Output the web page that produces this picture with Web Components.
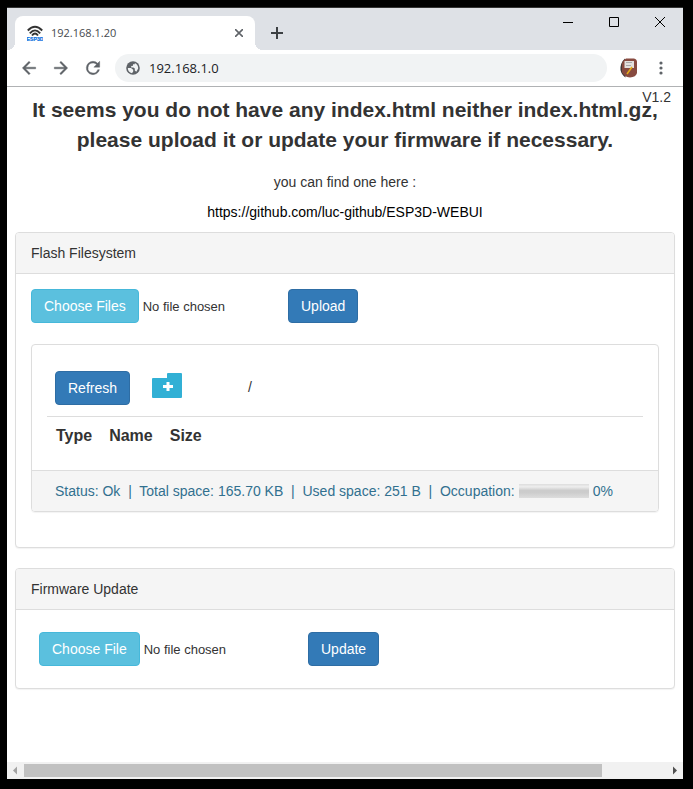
<!DOCTYPE html>
<html lang="en">
<head>
<meta charset="utf-8">
<title>192.168.1.20</title>
<style>
    body {
        box-sizing: border-box;
        display: flex;
        min-height: 100vh;
        margin: 0;
        padding: 7px 10px 10px 7px;
        background: #000;
        color: #333;
        font: 14px/20px "Liberation Sans", Arial, sans-serif;
    }
</style>
</head>
<body>
<browser-window>
    <browser-tab slot="tab">192.168.1.20</browser-tab>
    <browser-toolbar slot="toolbar" address="192.168.1.0"></browser-toolbar>
    <esp-page version="V1.2">
        <esp-panel heading="Flash Filesystem">
            <upload-form button="Upload" multiple></upload-form>
            <file-browser></file-browser>
        </esp-panel>
        <esp-panel heading="Firmware Update">
            <upload-form class="inset" button="Update"></upload-form>
        </esp-panel>
    </esp-page>
    <scroll-bar slot="scrollbar"></scroll-bar>
</browser-window>

<script>
function attach(element, html) {
    const template = document.createElement("template");
    template.innerHTML = html;
    const shadow = element.attachShadow({ mode: "open" });
    shadow.appendChild(template.content.cloneNode(true));
    return shadow;
}

class BrowserWindow extends HTMLElement {
    constructor() {
        super();
        attach(this, `
            <style>
                :host {
                    box-sizing: border-box;
                    display: flex;
                    flex-direction: column;
                    flex: 1;
                    min-width: 0;
                    border-top: 1px solid #333;
                    background: #fff;
                }

                .strip {
                    display: flex;
                    justify-content: space-between;
                    height: 42px;
                    background: #dee1e6;
                }

                .tabs {
                    display: flex;
                    align-items: flex-end;
                    padding-left: 8px;
                }

                button {
                    display: flex;
                    align-items: center;
                    justify-content: center;
                    padding: 0;
                    border: 0;
                    background: none;
                }

                .new {
                    width: 28px;
                    height: 34px;
                    margin-left: 8px;
                }

                .controls {
                    display: flex;
                }

                .controls button {
                    width: 46px;
                    height: 28px;
                }

                main {
                    flex: 1;
                }
            </style>

            <div class="strip">
                <div class="tabs">
                    <slot name="tab"></slot>
                    <button class="new" aria-label="New tab">
                        <svg width="12" height="12" stroke="#3c4043" stroke-width="2"><path d="M6 0V12M0 6H12"/></svg>
                    </button>
                </div>
                <div class="controls">
                    <button aria-label="Minimize">
                        <svg width="10" height="10" stroke="#000"><path d="M0 5.500H10"/></svg>
                    </button>
                    <button aria-label="Maximize">
                        <svg width="10" height="10" stroke="#000" fill="none"><path d="M.5.5h9v9h-9z"/></svg>
                    </button>
                    <button aria-label="Close">
                        <svg width="10" height="10" stroke="#000"><path d="M0 0L10 10M10 0L0 10"/></svg>
                    </button>
                </div>
            </div>
            <slot name="toolbar"></slot>
            <main><slot></slot></main>
            <slot name="scrollbar"></slot>
        `);
    }
}

class BrowserTab extends HTMLElement {
    constructor() {
        super();
        attach(this, `
            <style>
                :host {
                    box-sizing: border-box;
                    position: relative;
                    display: flex;
                    align-items: center;
                    width: 240px;
                    height: 34px;
                    padding: 0 10px 0 12px;
                    border-radius: 8px 8px 0 0;
                    background: #fff;
                    color: #45494d;
                    font: 11px/16px "Open Sans", sans-serif;
                }

                /* flared feet of the active tab */
                :host::before,
                :host::after {
                    content: "";
                    position: absolute;
                    bottom: 0;
                    width: 8px;
                    height: 8px;
                }

                :host::before {
                    right: 100%;
                    background: radial-gradient(circle at 0 0, transparent 8px, #fff 8px);
                }

                :host::after {
                    left: 100%;
                    background: radial-gradient(circle at 100% 0, transparent 8px, #fff 8px);
                }

                span {
                    flex: 1;
                    margin-left: 8px;
                }

                button {
                    display: flex;
                    padding: 2px;
                    border: 0;
                    background: none;
                }
            </style>

            <svg width="16" height="16" viewBox="0 0 16 16" fill="none" stroke="#333">
                <path stroke-width="1.900" d="M.8 5.500Q8-2 15.200 5.500M2.800 8.300Q8 2.500 13.200 8.300"/>
                <path stroke-width="1.800" d="M5 10.500Q8 6.500 11 10.500"/>
                <text x="-0.500" y="15.500" fill="#0a6ee0" stroke="#0a6ee0" stroke-width=".2" font-family="Liberation Sans, sans-serif" font-size="5.200" font-weight="bold">ESP3D</text>
            </svg>
            <span><slot></slot></span>
            <button aria-label="Close tab">
                <svg width="8" height="8" stroke="#5f6368" stroke-width="1.600"><path d="M0 0L8 8M8 0L0 8"/></svg>
            </button>
        `);
    }
}

class BrowserToolbar extends HTMLElement {
    constructor() {
        super();
        const shadow = attach(this, `
            <style>
                :host {
                    box-sizing: border-box;
                    display: flex;
                    align-items: center;
                    height: 37px;
                    padding: 0 6px;
                    border-bottom: 1px solid #b0b2b4;
                }

                button {
                    display: flex;
                    align-items: center;
                    justify-content: center;
                    width: 32px;
                    height: 28px;
                    padding: 0;
                    border: 0;
                    background: none;
                    fill: #5f6368;
                }

                .address {
                    display: flex;
                    flex: 1;
                    align-items: center;
                    gap: 8px;
                    min-width: 0;
                    height: 28px;
                    margin: 0 6px;
                    padding: 0 10px;
                    border-radius: 14px;
                    background: #f1f3f4;
                }

                input {
                    flex: 1;
                    min-width: 0;
                    padding: 0;
                    border: 0;
                    outline: 0;
                    background: none;
                    color: #202124;
                    font: 13px/20px "Open Sans", sans-serif;
                }
            </style>

            <button aria-label="Back">
                <svg width="20" height="20" viewBox="0 0 24 24" stroke="#5f6368" stroke-width=".5"><path d="M20 11H7.830l5.590-5.590L12 4l-8 8 8 8 1.410-1.410L7.830 13H20z"/></svg>
            </button>
            <button aria-label="Forward">
                <svg width="20" height="20" viewBox="0 0 24 24" stroke="#5f6368" stroke-width=".5"><path d="M12 4l-1.410 1.410L16.170 11H4v2h12.170l-5.580 5.590L12 20l8-8z"/></svg>
            </button>
            <button aria-label="Reload">
                <svg width="20" height="20" viewBox="0 0 24 24" stroke="#5f6368" stroke-width=".5"><path d="M17.650 6.350A7.960 7.960 0 0 0 12 4a8 8 0 1 0 7.730 10h-2.080A6 6 0 1 1 12 6c1.660 0 3.140.69 4.220 1.780L13 11h7V4z"/></svg>
            </button>
            <div class="address">
                <svg width="16" height="16" viewBox="0 0 16 16">
                    <circle cx="8" cy="8" r="6.800" fill="#5f6368"/>
                    <path fill="#f1f3f4" d="M2.800 8H6L8.200 9.800V11.500L7 13.200Q3 12.500 2.800 8ZM9.800 3Q13.300 4.500 13.200 8.500L11.300 11.800 9.800 10.500V8.500L8.300 7.500H6.200V6L8 5.800V4.300H9.800Z"/>
                </svg>
                <input type="text" aria-label="Address">
            </div>
            <button aria-label="Extension">
                <svg width="20" height="20" viewBox="0 0 20 20">
                    <path fill="#333" d="M6 .5Q1 5 1.500 12q1 5 5 7.500z"/>
                    <path fill="#884b40" d="M7 .5H15Q18 1 18 4V15Q17 19 11 19.500 5 19 2.800 14V6Q4 2 7 .5Z"/>
                    <path fill="#e3e0dd" d="M5.500 3h9.500v7H5.500z"/>
                    <path stroke="#aaa" d="M7 4.500h6M7 7.500h5"/>
                    <path stroke="#e6ad18" stroke-width="1.500" d="M13 9L8 16"/>
                </svg>
            </button>
            <button aria-label="Menu">
                <svg width="4" height="14" viewBox="0 0 4 14"><circle cx="2" cy="2" r="1.600"/><circle cx="2" cy="7" r="1.600"/><circle cx="2" cy="12" r="1.600"/></svg>
            </button>
        `);
        this.input = shadow.querySelector("input");
    }

    connectedCallback() {
        this.input.value = this.getAttribute("address");
    }
}

class EspPage extends HTMLElement {
    constructor() {
        super();
        const shadow = attach(this, `
            <style>
                :host {
                    position: relative;
                    display: block;
                    padding: 8px;
                    text-align: center;
                }

                .version {
                    position: absolute;
                    top: 0;
                    right: 12px;
                }

                h1 {
                    margin: 0 0 17px;
                    font-size: 21px;
                    line-height: 30px;
                }

                p {
                    margin: 0 0 10px;
                }

                a {
                    color: #000;
                    text-decoration: none;
                }

                .panels {
                    display: flex;
                    flex-direction: column;
                    gap: 20px;
                    text-align: left;
                }
            </style>

            <div class="version"></div>
            <h1>It seems you do not have any index.html neither index.html.gz,<br>please upload it or update your firmware if necessary.</h1>
            <p>you can find one here :</p>
            <p><a href="https://github.com/luc-github/ESP3D-WEBUI">https://github.com/luc-github/ESP3D-WEBUI</a></p>
            <div class="panels"><slot></slot></div>
        `);
        this.version = shadow.querySelector(".version");
    }

    connectedCallback() {
        this.version.textContent = this.getAttribute("version");
    }
}

class EspPanel extends HTMLElement {
    constructor() {
        super();
        const shadow = attach(this, `
            <style>
                :host {
                    display: block;
                    border: 1px solid #ddd;
                    border-radius: 4px;
                    background: #fff;
                    box-shadow: 0 1px 1px rgba(0, 0, 0, 0.05);
                }

                header {
                    padding: 10px 15px;
                    border-bottom: 1px solid #ddd;
                    border-radius: 3px 3px 0 0;
                    background: #f5f5f5;
                }

                .body {
                    padding: 15px;
                }
            </style>

            <header></header>
            <div class="body"><slot></slot></div>
        `);
        this.header = shadow.querySelector("header");
    }

    connectedCallback() {
        this.header.textContent = this.getAttribute("heading");
    }
}

class EspButton extends HTMLElement {
    constructor() {
        super();
        attach(this, `
            <style>
                :host {
                    display: inline-flex;
                }

                button {
                    height: 34px;
                    padding: 0 12px;
                    border: 1px solid #2e6da4;
                    border-radius: 4px;
                    background: #337ab7;
                    color: #fff;
                    font: inherit;
                }
            </style>

            <button type="button"><slot></slot></button>
        `);
    }
}

class UploadForm extends HTMLElement {
    constructor() {
        super();
        const shadow = attach(this, `
            <style>
                :host {
                    display: flex;
                }

                :host(.inset) {
                    padding: 7px 8px;
                }

                input {
                    width: 257px;
                    height: 34px;
                    color: #333;
                    font: 13px/20px "Liberation Sans", Arial, sans-serif;
                }

                :host(.inset) input {
                    width: 269px;
                }

                input::file-selector-button {
                    height: 34px;
                    margin: 0 4px 0 0;
                    padding: 0 12px;
                    border: 1px solid #46b8da;
                    border-radius: 4px;
                    background: #5bc0de;
                    color: #fff;
                    font-size: 14px;
                }
            </style>

            <input type="file">
            <esp-button></esp-button>
        `);
        this.input = shadow.querySelector("input");
        this.button = shadow.querySelector("esp-button");
    }

    connectedCallback() {
        this.input.multiple = this.hasAttribute("multiple");
        this.input.setAttribute("aria-label", this.getAttribute("button"));
        this.button.textContent = this.getAttribute("button");
    }
}

class FileBrowser extends HTMLElement {
    constructor() {
        super();
        attach(this, `
            <style>
                :host {
                    display: block;
                    margin: 21px 0 20px;
                    border: 1px solid #ddd;
                    border-radius: 4px;
                    box-shadow: 0 1px 1px rgba(0, 0, 0, 0.05);
                }

                .body {
                    padding: 15px;
                }

                .actions {
                    display: flex;
                    padding: 11px 8px;
                    border-bottom: 1px solid #ddd;
                }

                .folder {
                    display: flex;
                    align-self: flex-start;
                    margin: 2px 66px 0 22px;
                    padding: 0;
                    border: 0;
                    background: none;
                }

                .path {
                    line-height: 32px;
                }

                table {
                    border-spacing: 1px 0;
                    font-size: 16px;
                    line-height: 22px;
                }

                th {
                    padding: 8px;
                }

                footer {
                    display: flex;
                    flex-wrap: wrap;
                    align-items: center;
                    gap: 4px;
                    padding: 10px 23px;
                    border-top: 1px solid #ddd;
                    border-radius: 0 0 3px 3px;
                    background: #f5f5f5;
                    color: #31708f;
                }

                progress {
                    appearance: none;
                    width: 70px;
                    height: 14px;
                    border: 0;
                }

                progress::-webkit-progress-bar {
                    background: linear-gradient(#ddd, #eee 20%, #ccc 45%, #ccc 60%, #ddd);
                }

                progress::-webkit-progress-value {
                    background: #31708f;
                }
            </style>

            <div class="body">
                <div class="actions">
                    <esp-button>Refresh</esp-button>
                    <button class="folder" aria-label="New folder">
                        <svg width="30" height="25" viewBox="0 0 30 25">
                            <path fill="#31b0d5" d="M1 5H15V1Q15 0 16 0H29Q30 0 30 1V24Q30 25 29 25H1Q0 25 0 24V6Q0 5 1 5Z"/>
                            <path stroke="#fff" stroke-width="3" d="M11 13.500H21M16 9V18"/>
                        </svg>
                    </button>
                    <span class="path">/</span>
                </div>
                <table>
                    <thead><tr><th>Type</th><th>Name</th><th>Size</th></tr></thead>
                    <tbody></tbody>
                </table>
            </div>
            <footer>
                <label for="occupation">Status: Ok &nbsp;|&nbsp; Total space: 165.70 KB &nbsp;|&nbsp; Used space: 251 B &nbsp;|&nbsp; Occupation:</label>
                <progress id="occupation" value="0" max="100"></progress>
                <span>0%</span>
            </footer>
        `);
    }
}

class ScrollBar extends HTMLElement {
    constructor() {
        super();
        attach(this, `
            <style>
                :host {
                    display: flex;
                    align-items: center;
                    height: 17px;
                    background: #f1f1f1;
                }

                svg {
                    width: 17px;
                    height: 17px;
                }

                .track {
                    display: flex;
                    flex: 1;
                }

                .thumb {
                    width: 90%;
                    height: 13px;
                    background: #c1c1c1;
                }
            </style>

            <svg fill="#a3a3a3"><path d="M6 8.500L10 4.500V12.500Z"/></svg>
            <div class="track"><div class="thumb"></div></div>
            <svg fill="#505050"><path d="M11 8.500L7 4.500V12.500Z"/></svg>
        `);
    }
}

customElements.define("browser-window", BrowserWindow);
customElements.define("browser-tab", BrowserTab);
customElements.define("browser-toolbar", BrowserToolbar);
customElements.define("esp-button", EspButton);
customElements.define("esp-page", EspPage);
customElements.define("esp-panel", EspPanel);
customElements.define("upload-form", UploadForm);
customElements.define("file-browser", FileBrowser);
customElements.define("scroll-bar", ScrollBar);
</script>
</body>
</html>
